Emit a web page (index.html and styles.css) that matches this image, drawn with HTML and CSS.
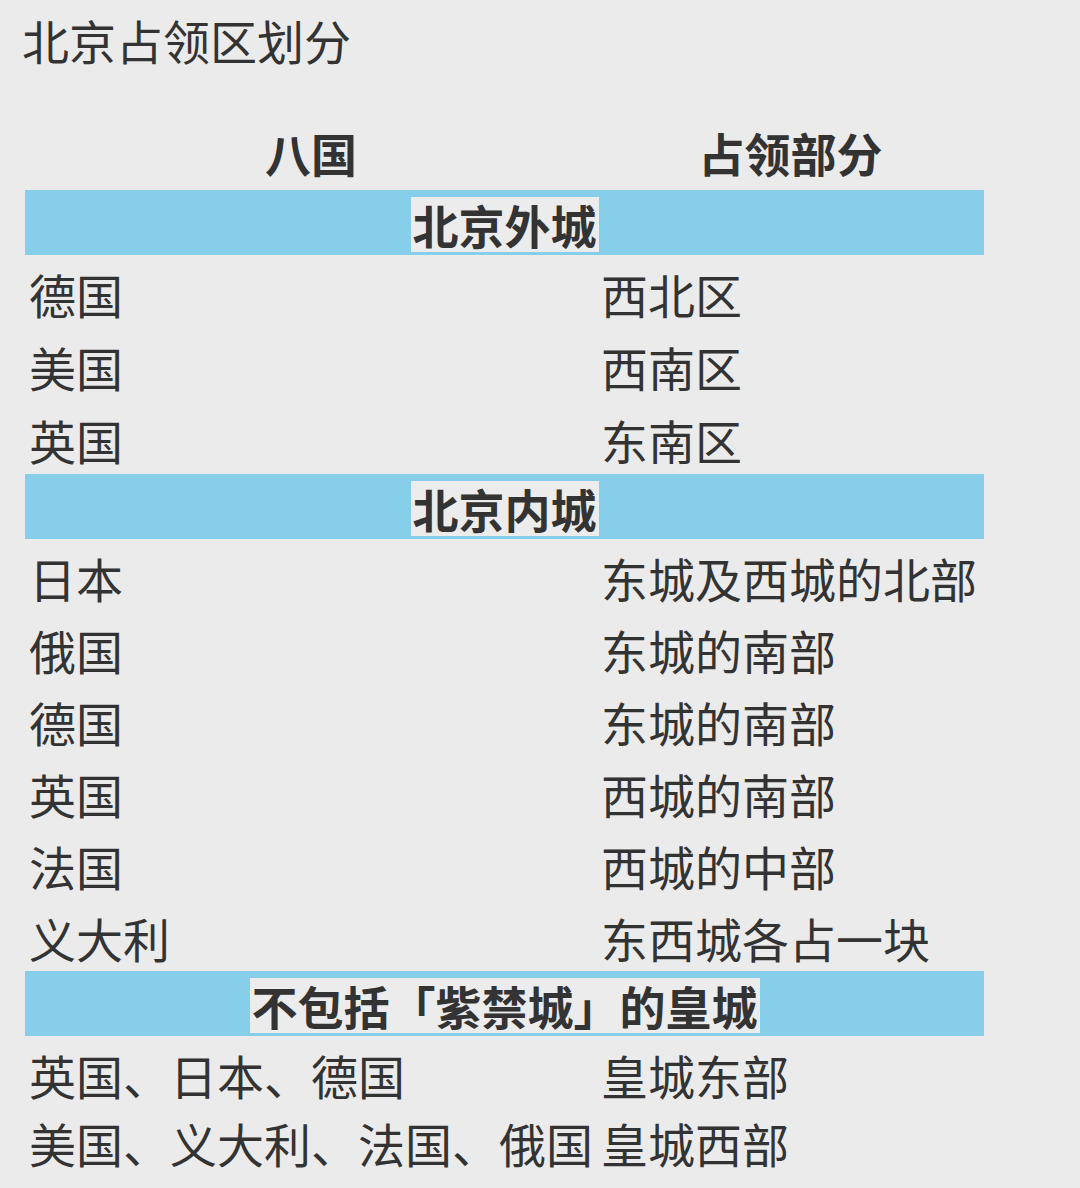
FILE: index.html
```html
<!DOCTYPE html>
<html lang="zh-CN">
<head>
<meta charset="utf-8">
<title>北京占领区划分</title>
<link rel="stylesheet" href="styles.css">
</head>
<body>
<div class="page">
  <h1 class="title">北京占领区划分</h1>
  <div class="table">
    <div class="head">八国</div>
    <div class="head">占领部分</div>

    <div class="band"><span class="mark">北京外城</span></div>
    <div class="cell tall">德国</div><div class="cell tall">西北区</div>
    <div class="cell tall">美国</div><div class="cell tall">西南区</div>
    <div class="cell tall">英国</div><div class="cell tall">东南区</div>

    <div class="band"><span class="mark">北京内城</span></div>
    <div class="cell">日本</div><div class="cell">东城及西城的北部</div>
    <div class="cell">俄国</div><div class="cell">东城的南部</div>
    <div class="cell">德国</div><div class="cell">东城的南部</div>
    <div class="cell">英国</div><div class="cell">西城的南部</div>
    <div class="cell">法国</div><div class="cell">西城的中部</div>
    <div class="cell">义大利</div><div class="cell">东西城各占一块</div>

    <div class="band"><span class="mark">不包括「紫禁城」的皇城</span></div>
    <div class="cell">英国、日本、德国</div><div class="cell">皇城东部</div>
    <div class="cell short">美国、义大利、法国、俄国</div><div class="cell short">皇城西部</div>
  </div>
</div>
</body>
</html>
```

FILE: styles.css
```css
html, body {
  margin: 0;
  padding: 0;
  background: #ebebeb;
}

.page {
  width: 1080px;
  height: 1188px;
  overflow: hidden;
  padding: 10px 0 0 0;
  box-sizing: border-box;
  font-family: "Noto Sans CJK SC", "Noto Sans", sans-serif;
  color: #333333;
}

.title {
  margin: 0 0 0 22px;
  font-size: 47px;
  font-weight: 400;
  line-height: 60px;
  height: 60px;
}

.table {
  margin: 50px 0 0 25px;
  width: 959px;
  display: grid;
  grid-template-columns: 572px 387px;
}

.head {
  height: 70px;
  line-height: 64px;
  font-size: 46px;
  font-weight: 700;
  text-align: center;
}

.band {
  grid-column: 1 / span 2;
  height: 65px;
  background: #87ceeb;
  display: flex;
  justify-content: center;
  align-items: flex-end;
  padding-bottom: 3px;
  box-sizing: border-box;
}

.mark {
  display: inline-block;
  background: #ececec;
  height: 55px;
  line-height: 55px;
  padding: 0 2px;
  font-size: 46px;
  font-weight: 700;
}

.cell {
  height: 72px;
  box-sizing: border-box;
  padding: 3px 0 0 4px;
  font-size: 47px;
  line-height: 72px;
  white-space: nowrap;
}

.cell.tall {
  height: 73px;
}

.cell.short {
  height: 70px;
  padding-top: 0;
  line-height: 70px;
}
```
